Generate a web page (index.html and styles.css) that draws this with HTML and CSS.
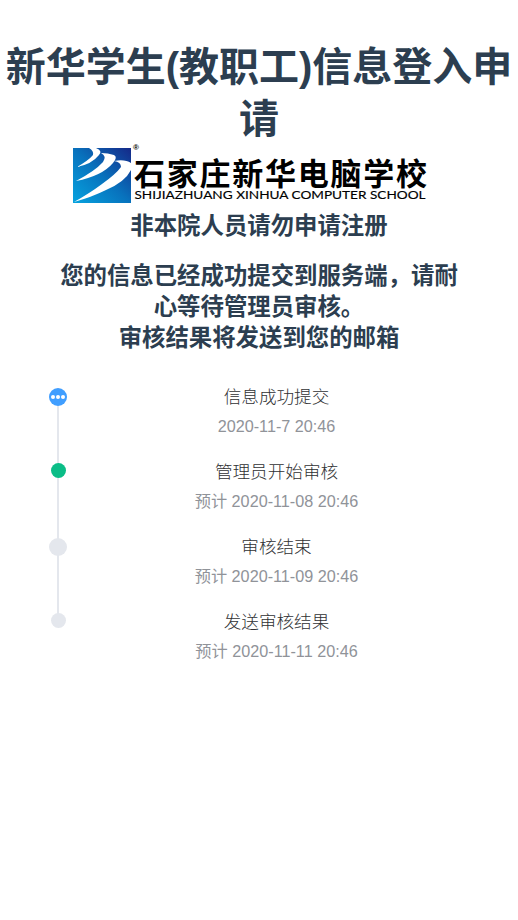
FILE: index.html
```html
<!DOCTYPE html>
<html lang="zh-CN">
<head>
<meta charset="utf-8">
<title>新华学生(教职工)信息登入申请</title>
<link rel="stylesheet" href="styles.css">
</head>
<body>
<main class="page">
  <h1 class="title">新华学生(教职工)信息登入申请</h1>
  <svg class="logo" viewBox="0 0 358 68" role="img" aria-label="石家庄新华电脑学校">
    <defs>
      <linearGradient id="sky" x1="0" y1="1" x2="1" y2="0">
        <stop offset="0" stop-color="#06a3df"/>
        <stop offset=".5" stop-color="#0872bd"/>
        <stop offset="1" stop-color="#152888"/>
      </linearGradient>
    </defs>
    <rect x="1" y="7" width="58" height="55" fill="url(#sky)"/>
    <g fill="#fff">
      <path d="M17 7H24Q31 10 27 14Q20 23 5 26Q17 19 21 14Q22 10 17 7Z"/>
      <path d="M29 12Q36 12 42 14Q46 16 41 22Q30 35 4 40Q23 30 31 21Q35 15 29 12Z"/>
      <path d="M42 20Q53 18 59 22V29Q53 41 34 49Q20 56 2 61Q18 52 30 43Q44 33 49 26Q49 21 42 20Z"/>
    </g>
    <text class="logo-mark" x="61" y="9">®</text>
    <text class="logo-name" x="62" y="43.500" textLength="293" lengthAdjust="spacing">石家庄新华电脑学校</text>
    <text class="logo-latin" x="62.500" y="58" textLength="291" lengthAdjust="spacingAndGlyphs">SHIJIAZHUANG XINHUA COMPUTER SCHOOL</text>
  </svg>
  <h2 class="notice">非本院人员请勿申请注册</h2>
  <h2 class="message">您的信息已经成功提交到服务端，请耐心等待管理员审核。<br>审核结果将发送到您的邮箱</h2>
  <ul class="timeline">
    <li class="step">
      <span class="node node-large node-active"><i class="dot"></i><i class="dot"></i><i class="dot"></i></span>
      <div class="step-name">信息成功提交</div>
      <div class="step-time">2020-11-7 20:46</div>
    </li>
    <li class="step">
      <span class="node node-done"></span>
      <div class="step-name">管理员开始审核</div>
      <div class="step-time">预计 2020-11-08 20:46</div>
    </li>
    <li class="step">
      <span class="node node-large"></span>
      <div class="step-name">审核结束</div>
      <div class="step-time">预计 2020-11-09 20:46</div>
    </li>
    <li class="step">
      <span class="node"></span>
      <div class="step-name">发送审核结果</div>
      <div class="step-time">预计 2020-11-11 20:46</div>
    </li>
  </ul>
</main>
</body>
</html>
```
FILE: styles.css
```css
body {
  margin: 0;
  background: #fff;
  color: #2c3e50;
  font-family: "Liberation Sans", "Noto Sans CJK SC", sans-serif;
}

.page {
  padding-top: 41px;
  text-align: center;
}

.title {
  margin: 0;
  font-size: 40px;
  line-height: 52px;
}

.logo {
  display: block;
  width: 358px;
  height: 68px;
  margin: -4px 0 0 72px;
}

.logo-mark {
  font: bold 8px "Liberation Sans", sans-serif;
}

.logo-name {
  font: bold 31px "Noto Sans CJK SC", sans-serif;
}

.logo-latin {
  font: 12px Lato, sans-serif;
  stroke: #000;
  stroke-width: .15px;
}

.notice,
.message {
  width: 400px;
  margin: 0 auto;
  font-size: 23.4px;
  line-height: 31px;
}

.notice {
  margin-top: 2px;
}

.message {
  margin-top: 19px;
}

.timeline {
  margin: 30px 0 0;
  padding: 0 0 0 35px;
  list-style: none;
}

.step {
  position: relative;
  height: 75px;
}

.step:not(:last-child)::before {
  content: "";
  position: absolute;
  top: 13px;
  left: 22px;
  width: 2px;
  height: 75px;
  background: #e4e7ed;
}

.node {
  position: absolute;
  top: 4px;
  left: 16px;
  width: 15px;
  height: 15px;
  border-radius: 50%;
  background: #e4e7ed;
}

.node-large {
  left: 14px;
  width: 18px;
  height: 18px;
}

.node-active {
  display: flex;
  align-items: center;
  justify-content: center;
  gap: 1px;
  background: #409eff;
}

.node-done {
  background: #0bbd87;
}

.dot {
  width: 4px;
  height: 4px;
  border-radius: 50%;
  background: #fff;
}

.step-name {
  color: #303133;
  font-size: 17.6px;
  font-weight: 300;
  line-height: 26px;
}

.step-time {
  padding-top: 5px;
  color: #909399;
  font-size: 16.2px;
  line-height: 22px;
}
```
